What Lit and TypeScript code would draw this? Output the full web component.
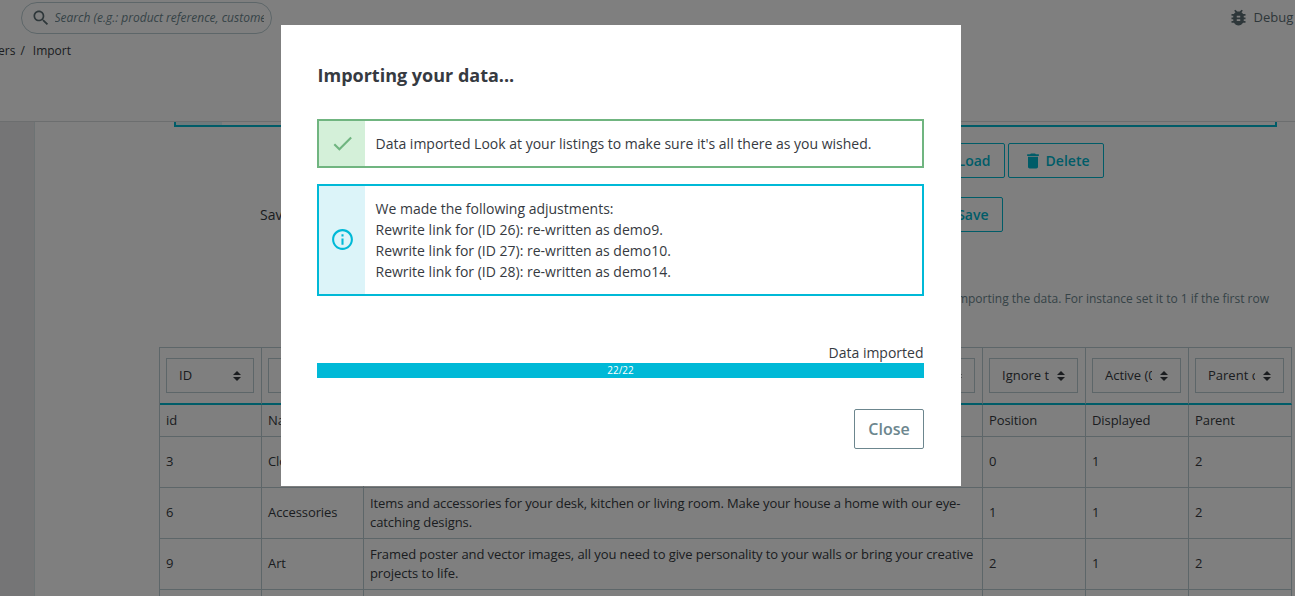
import { LitElement, html, css, svg } from "lit";
import { customElement } from "lit/decorators.js";

const icons: Record<string, string> = {
  search:
    "M15.5 14h-.79l-.28-.27C15.41 12.59 16 11.11 16 9.5 16 5.91 13.09 3 9.5 3S3 5.91 3 9.5 5.91 16 9.5 16c1.61 0 3.09-.59 4.23-1.57l.27.28v.79l5 4.99L20.49 19l-4.99-5zm-6 0C7.01 14 5 11.99 5 9.5S7.01 5 9.5 5 14 7.01 14 9.5 11.99 14 9.5 14z",
  bug: "M20 8h-2.81c-.45-.78-1.07-1.45-1.82-1.96L17 4.41 15.59 3l-2.17 2.17C12.96 5.06 12.49 5 12 5c-.49 0-.96.06-1.41.17L8.41 3 7 4.41l1.62 1.63C7.88 6.55 7.26 7.22 6.81 8H4v2h2.09c-.05.33-.09.66-.09 1v1H4v2h2v1c0 .34.04.67.09 1H4v2h2.81c1.04 1.79 2.97 3 5.19 3s4.15-1.21 5.19-3H20v-2h-2.09c.05-.33.09-.66.09-1v-1h2v-2h-2v-1c0-.34-.04-.67-.09-1H20V8zm-6 8h-4v-2h4v2zm0-4h-4v-2h4v2z",
  trash: "M6 19c0 1.1.9 2 2 2h8c1.1 0 2-.9 2-2V7H6v12zM19 4h-3.5l-1-1h-5l-1 1H5v2h14V4z",
  check: "M9 16.17L4.83 12l-1.42 1.41L9 19 21 7l-1.41-1.41z",
  info: "M11 17h2v-6h-2v6zm1-15C6.48 2 2 6.48 2 12s4.48 10 10 10 10-4.48 10-10S17.52 2 12 2zm0 18c-4.41 0-8-3.59-8-8s3.59-8 8-8 8 3.59 8 8-3.59 8-8 8zM11 9h2V7h-2v2z",
};

const icon = (name: string, cls = "") =>
  html`<svg class="icon ${cls}" viewBox="0 0 24 24">${svg`<path d=${icons[name]} />`}</svg>`;

const columns = ["ID", "Name", "Description", "Ignore this column", "Active (0/1)", "Parent category"];

const rows = [
  ["id", "Name", "", "Position", "Displayed", "Parent"],
  ["3", "Clothes", "", "0", "1", "2"],
  [
    "6",
    "Accessories",
    "Items and accessories for your desk, kitchen or living room. Make your house a home with our eye-catching designs.",
    "1",
    "1",
    "2",
  ],
  [
    "9",
    "Art",
    "Framed poster and vector images, all you need to give personality to your walls or bring your creative projects to life.",
    "2",
    "1",
    "2",
  ],
  ["", "", "", "", "", ""],
];

@customElement("app-root")
export class AppRoot extends LitElement {
  static styles = css`
    :host {
      display: block;
      position: relative;
      width: 1295px;
      height: 596px;
      overflow: hidden;
      background: #fff;
      font: 14px/21px "Open Sans", sans-serif;
      color: #363a41;
    }
    * {
      box-sizing: border-box;
    }
    .icon {
      width: 20px;
      height: 20px;
      fill: currentColor;
      flex: none;
      display: block;
    }
    .page {
      display: flex;
      flex-direction: column;
      height: 596px;
    }
    .header {
      height: 122px;
      flex: none;
      border-bottom: 1px solid #d9dcde;
    }
    .topbar {
      display: flex;
      justify-content: space-between;
      height: 36px;
      padding: 2px 0 0 21px;
    }
    .search {
      display: flex;
      align-items: center;
      width: 251px;
      height: 32px;
      padding: 0 7px 1px 8.5px;
      border: 1px solid #bbcdd2;
      border-radius: 16px;
      color: #6c868e;
      font-size: 12px;
      font-style: italic;
    }
    .search .icon {
      color: #5c6e74;
      margin-right: 4px;
    }
    .search .hint {
      overflow: hidden;
      white-space: nowrap;
    }
    .debug {
      display: flex;
      align-items: center;
      width: 67px;
      height: 30px;
      font-size: 13px;
      white-space: nowrap;
      color: #5c6e74;
    }
    .debug .icon {
      width: 21px;
      height: 21px;
      margin-right: 4.5px;
    }
    .crumbs {
      display: flex;
      gap: 8px;
      margin-left: -2px;
      padding-top: 5px;
      font-size: 12px;
      line-height: 19px;
    }
    .crumbs .sep {
      margin-left: -3px;
    }
    .body {
      display: flex;
      flex: 1;
      min-height: 0;
    }
    .side {
      width: 34px;
      flex: none;
      background: #eaebec;
    }
    .main {
      flex: 1;
      min-width: 0;
      border-left: 1px solid #dbe6e9;
    }
    .notice {
      width: 1103px;
      height: 5px;
      margin-left: 139px;
      border: 2px solid #00b9d1;
      border-top: 0;
      background: linear-gradient(90deg, #dcf4f9 46px, #fff 46px);
    }
    .actions {
      display: flex;
      justify-content: flex-end;
      gap: 3px;
      margin-top: 16px;
      padding-right: 191px;
    }
    .savebar {
      display: flex;
      justify-content: space-between;
      align-items: center;
      margin-top: 19px;
      padding: 0 292px 0 225px;
    }
    .btn {
      display: flex;
      align-items: center;
      gap: 3px;
      height: 35px;
      padding: 0 13.5px;
      border: 1px solid #00b9d1;
      border-radius: 2px;
      color: #00b9d1;
      font-weight: 600;
    }
    .help {
      margin-top: 56px;
      padding-right: 26px;
      text-align: right;
      font-size: 12px;
      color: #6c868e;
    }
    .grid {
      width: 1133px;
      margin: 38px 0 0 124px;
      border: 1px solid #bbcdd2;
      border-width: 1px 0 0 1px;
      font-size: 13px;
      line-height: 19.5px;
    }
    .row {
      display: grid;
      grid-template-columns: 102px 102px 619px 103px 103px 103px;
    }
    .cell {
      display: flex;
      align-items: center;
      height: 51px;
      padding: 0 6px;
      border: 1px solid #bbcdd2;
      border-width: 0 1px 1px 0;
      letter-spacing: -0.08px;
    }
    .short .cell {
      height: 32px;
    }
    .head .cell {
      height: 57px;
      padding: 0 7px 2px 6px;
      border-bottom: 2px solid #00b9d1;
      letter-spacing: 0;
    }
    .select {
      display: flex;
      align-items: center;
      justify-content: space-between;
      width: 100%;
      height: 35px;
      padding: 1px 12px 0;
      border: 1px solid #bbcdd2;
      margin-top: 1px;
    }
    .value {
      width: 47px;
      overflow: hidden;
      white-space: nowrap;
    }
    .arrows {
      width: 8px;
      height: 10px;
      fill: #363a41;
    }
    .overlay {
      position: absolute;
      inset: 0;
      padding-top: 25px;
      background: rgba(0, 0, 0, 0.5);
    }
    .modal {
      width: 680px;
      height: 461px;
      margin-left: 281px;
      padding: 38px 37px 0 36px;
      background: #fff;
    }
    .title {
      margin: 0;
      padding-left: 0.5px;
      font-size: 18px;
      line-height: 25px;
      font-weight: 700;
    }
    .alert {
      display: flex;
      margin-bottom: 16px;
      border: 2px solid;
    }
    .alert .mark {
      display: flex;
      align-items: center;
      justify-content: center;
      width: 46px;
      flex: none;
    }
    .alert .mark .icon {
      width: 25px;
      height: 25px;
    }
    .alert .text {
      padding: 12px 10px 12px 10.5px;
      color: #363a41;
    }
    .ok {
      height: 49px;
      margin-top: 31px;
      border-color: #70b580;
      color: #70b580;
    }
    .ok .mark {
      background: #d4f0d9;
    }
    .note {
      height: 112px;
      border-color: #00b9d7;
      color: #00b9d7;
    }
    .note .mark {
      padding-bottom: 1px;
      background: #dcf4f9;
    }
    .status {
      margin-top: 46px;
      padding-right: 0.5px;
      text-align: right;
    }
    .bar {
      height: 15px;
      background: #00b9d7;
      color: #fff;
      font-size: 10px;
      line-height: 15px;
      text-align: center;
    }
    .footer {
      display: flex;
      justify-content: flex-end;
      margin-top: 31px;
    }
    .close {
      display: flex;
      align-items: center;
      justify-content: center;
      width: 70px;
      height: 40px;
      border: 1px solid #6c868e;
      border-radius: 2px;
      color: #6c868e;
      font-size: 16px;
      font-weight: 600;
    }
  `;

  private select(label: string) {
    return html`<div class="select">
      <span class="value">${label}</span>
      <svg class="arrows" viewBox="0 0 8 10"><path d="M0 4L4 0L8 4ZM0 6L4 10L8 6Z" /></svg>
    </div>`;
  }

  render() {
    return html`
      <div class="page">
        <div class="header">
          <div class="topbar">
            <div class="search">${icon("search")}<span class="hint">Search (e.g.: product reference, customer</span></div>
            <div class="debug">${icon("bug")}<span>Debug mode</span></div>
          </div>
          <div class="crumbs"><span>ers</span><span class="sep">/</span><span>Import</span></div>
        </div>
        <div class="body">
          <div class="side"></div>
          <div class="main">
            <div class="notice"></div>
            <div class="actions">
              <div class="btn">Load</div>
              <div class="btn">${icon("trash")}Delete</div>
            </div>
            <div class="savebar"><span>Save</span><div class="btn">Save</div></div>
            <div class="help">importing the data. For instance set it to 1 if the first row</div>
            <div class="grid">
              <div class="row head">${columns.map((c) => html`<div class="cell">${this.select(c)}</div>`)}</div>
              ${rows.map(
                (r, i) => html`<div class="row ${i === 0 ? "short" : ""}">
                  ${r.map((c) => html`<div class="cell"><span>${c}</span></div>`)}
                </div>`
              )}
            </div>
          </div>
        </div>
      </div>
      <div class="overlay">
        <div class="modal">
          <h4 class="title">Importing your data...</h4>
          <div class="alert ok">
            <div class="mark">${icon("check")}</div>
            <div class="text">Data imported Look at your listings to make sure it's all there as you wished.</div>
          </div>
          <div class="alert note">
            <div class="mark">${icon("info")}</div>
            <div class="text">
              <div>We made the following adjustments:</div>
              <div>Rewrite link for (ID 26): re-written as demo9.</div>
              <div>Rewrite link for (ID 27): re-written as demo10.</div>
              <div>Rewrite link for (ID 28): re-written as demo14.</div>
            </div>
          </div>
          <div class="status">Data imported</div>
          <div class="bar">22/22</div>
          <div class="footer"><div class="close">Close</div></div>
        </div>
      </div>
    `;
  }
}
